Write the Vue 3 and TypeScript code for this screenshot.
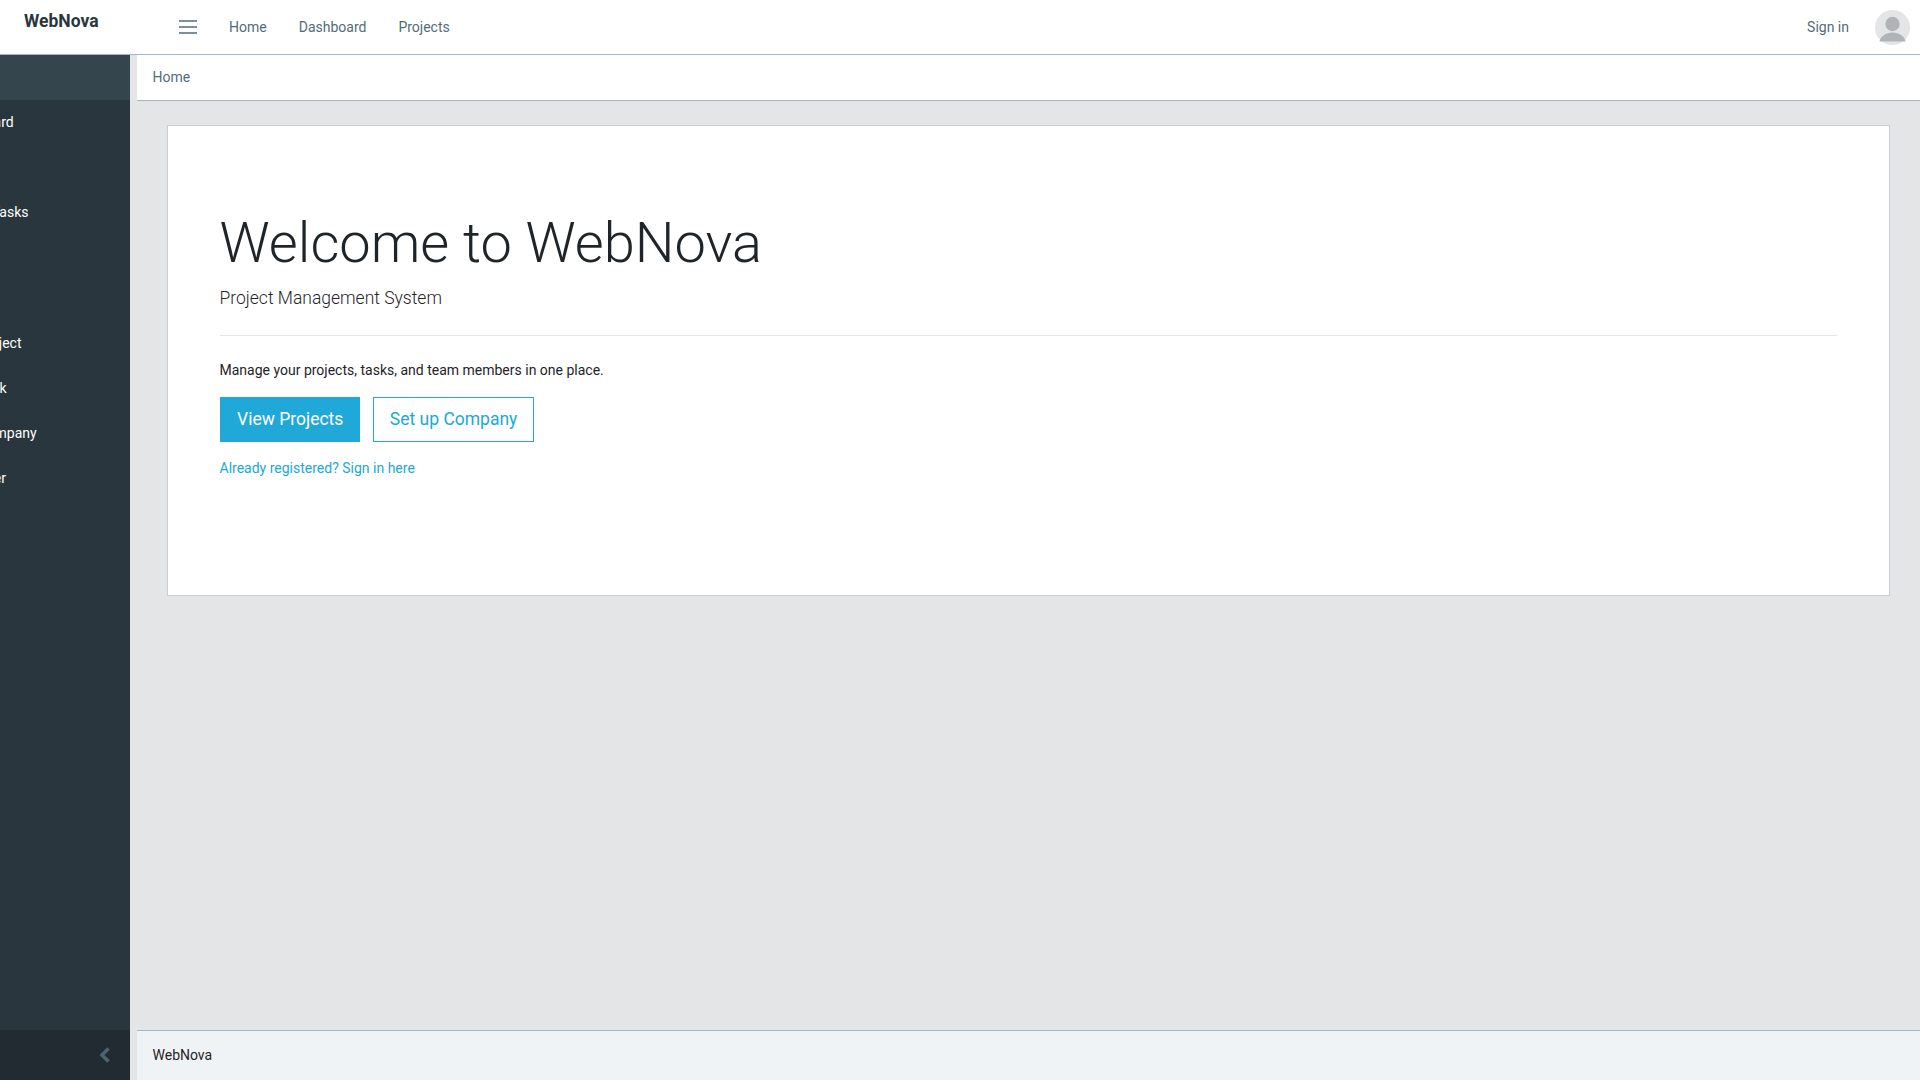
<script setup lang="ts">
interface SideItem { label: string; gap: number }
const sideItems: SideItem[] = [
  { label: 'Dashboard', gap: 0 },
  { label: 'Assign Tasks', gap: 45 },
  { label: 'New Project', gap: 86 },
  { label: 'New Task', gap: 0 },
  { label: 'New Company', gap: 0 },
  { label: 'New User', gap: 0 }
]
const topLinks = ['Home', 'Dashboard', 'Projects']
</script>

<template>
  <div class="app">
    <header class="topbar">
      <div class="brand">WebNova</div>
      <button class="burger" aria-label="Toggle menu">
        <svg width="20" height="16" viewBox="0 0 20 16">
          <path d="M1 2h18M1 8h18M1 14h18" stroke="#536c79" stroke-width="1.6" fill="none" />
        </svg>
      </button>
      <nav class="toplinks">
        <a v-for="link in topLinks" :key="link" class="toplink">{{ link }}</a>
      </nav>
      <a class="signin">Sign in</a>
      <span class="avatar">
        <svg width="35" height="35" viewBox="0 0 35 35">
          <circle cx="17.5" cy="17.5" r="17.5" fill="#e4e5e6" />
          <circle cx="17.5" cy="14" r="7.2" fill="#b0b4b7" />
          <path d="M4.500 31.500C5 26.500 11 22.500 17.500 22.500s12.500 4 13 9Z" fill="#b0b4b7" />
        </svg>
      </span>
    </header>

    <div class="body">
      <aside class="sidebar">
        <div class="band"></div>
        <nav class="sidenav">
          <a
            v-for="item in sideItems"
            :key="item.label"
            class="sidelink"
            :style="{ marginTop: item.gap + 'px' }"
          >{{ item.label }}</a>
        </nav>
        <div class="minimizer">
          <svg width="12" height="16" viewBox="0 0 12 16">
            <path d="M9.500 1.500 3 8l6.500 6.500" stroke="#4d6471" stroke-width="3.500" fill="none" />
          </svg>
        </div>
      </aside>

      <div class="main">
        <div class="crumb">Home</div>
        <main class="content">
          <section class="card">
            <h1 class="title">Welcome to WebNova</h1>
            <p class="lead">Project Management System</p>
            <hr class="rule" />
            <p class="desc">Manage your projects, tasks, and team members in one place.</p>
            <div class="actions">
              <a class="btn primary">View Projects</a>
              <a class="btn outline">Set up Company</a>
            </div>
            <a class="already">Already registered? Sign in here</a>
          </section>
        </main>
        <footer class="foot">WebNova</footer>
      </div>
    </div>
  </div>
</template>

<style scoped>
.app {
  display: flex;
  flex-direction: column;
  height: 100vh;
  background: #e4e5e6;
  color: #1f2428;
  font-family: Roboto, "Liberation Sans", sans-serif;
  font-size: 14px;
  line-height: 1.5;
  overflow: hidden;
}
.topbar {
  display: flex;
  align-items: center;
  flex: none;
  height: 55px;
  box-sizing: border-box;
  background: #fff;
  border-bottom: 1px solid #a4b7c1;
}
.brand {
  flex: none;
  width: 154px;
  padding-left: 24px;
  font-size: 17.5px;
  font-weight: 700;
  color: #29363d;
  margin-top: -11px;
}
.burger {
  display: flex;
  padding: 0;
  border: 0;
  background: none;
}
.toplinks {
  display: flex;
  margin-left: 31px;
  gap: 32px;
}
.toplink,
.signin {
  color: #536c79;
}
.signin {
  margin-left: auto;
  margin-right: 26px;
}
.avatar {
  display: flex;
  margin-right: 10px;
}
.body {
  display: flex;
  flex: 1;
  min-height: 0;
}
.sidebar {
  display: flex;
  flex-direction: column;
  flex: none;
  width: 130px;
  background: #29363d;
  color: #fff;
  overflow: hidden;
}
.band {
  flex: none;
  height: 45px;
  background: #35454e;
}
.sidenav {
  display: flex;
  flex-direction: column;
  flex: 1;
  width: 200px;
  margin-left: -70px;
}
.sidelink {
  display: block;
  padding: 12px 16px;
  height: 45px;
  box-sizing: border-box;
  white-space: nowrap;
}
.minimizer {
  display: flex;
  align-items: center;
  justify-content: flex-end;
  flex: none;
  height: 50px;
  padding-right: 19px;
  box-sizing: border-box;
  background: #212b31;
}
.main {
  display: flex;
  flex-direction: column;
  flex: 1;
  min-width: 0;
  margin-left: 7px;
}
.crumb {
  flex: none;
  height: 46px;
  box-sizing: border-box;
  padding: 12px 15.5px;
  background: #fff;
  border-bottom: 1px solid #a4b7c1;
  color: #536c79;
}
.content {
  flex: 1;
  padding: 24px 30px;
}
.card {
  padding: 84px 52.5px 116px 51.5px;
  background: #fff;
  border: 1px solid #c8ced3;
}
.title {
  margin: 0 0 8px;
  font-size: 56px;
  font-weight: 300;
  line-height: 1.2;
}
.lead {
  margin: 0;
  font-size: 17.5px;
  font-weight: 300;
}
.rule {
  margin: 24px 0;
  border: 0;
  border-top: 1px solid rgba(0, 0, 0, 0.1);
}
.desc {
  margin: 0 0 16px;
}
.actions {
  display: flex;
  gap: 12.5px;
  margin-left: 0.5px;
}
.btn {
  display: block;
  height: 45px;
  box-sizing: border-box;
  padding: 8px 16px;
  border: 1px solid #20a8d8;
  font-size: 17.5px;
}
.primary {
  background: #20a8d8;
  color: #fff;
}
.outline {
  color: #20a8d8;
}
.already {
  display: block;
  margin-top: 16px;
  color: #20a8d8;
}
.foot {
  flex: none;
  height: 50px;
  box-sizing: border-box;
  padding: 14px 15.5px;
  background: #f0f3f5;
  border-top: 1px solid #a4b7c1;
}
</style>
